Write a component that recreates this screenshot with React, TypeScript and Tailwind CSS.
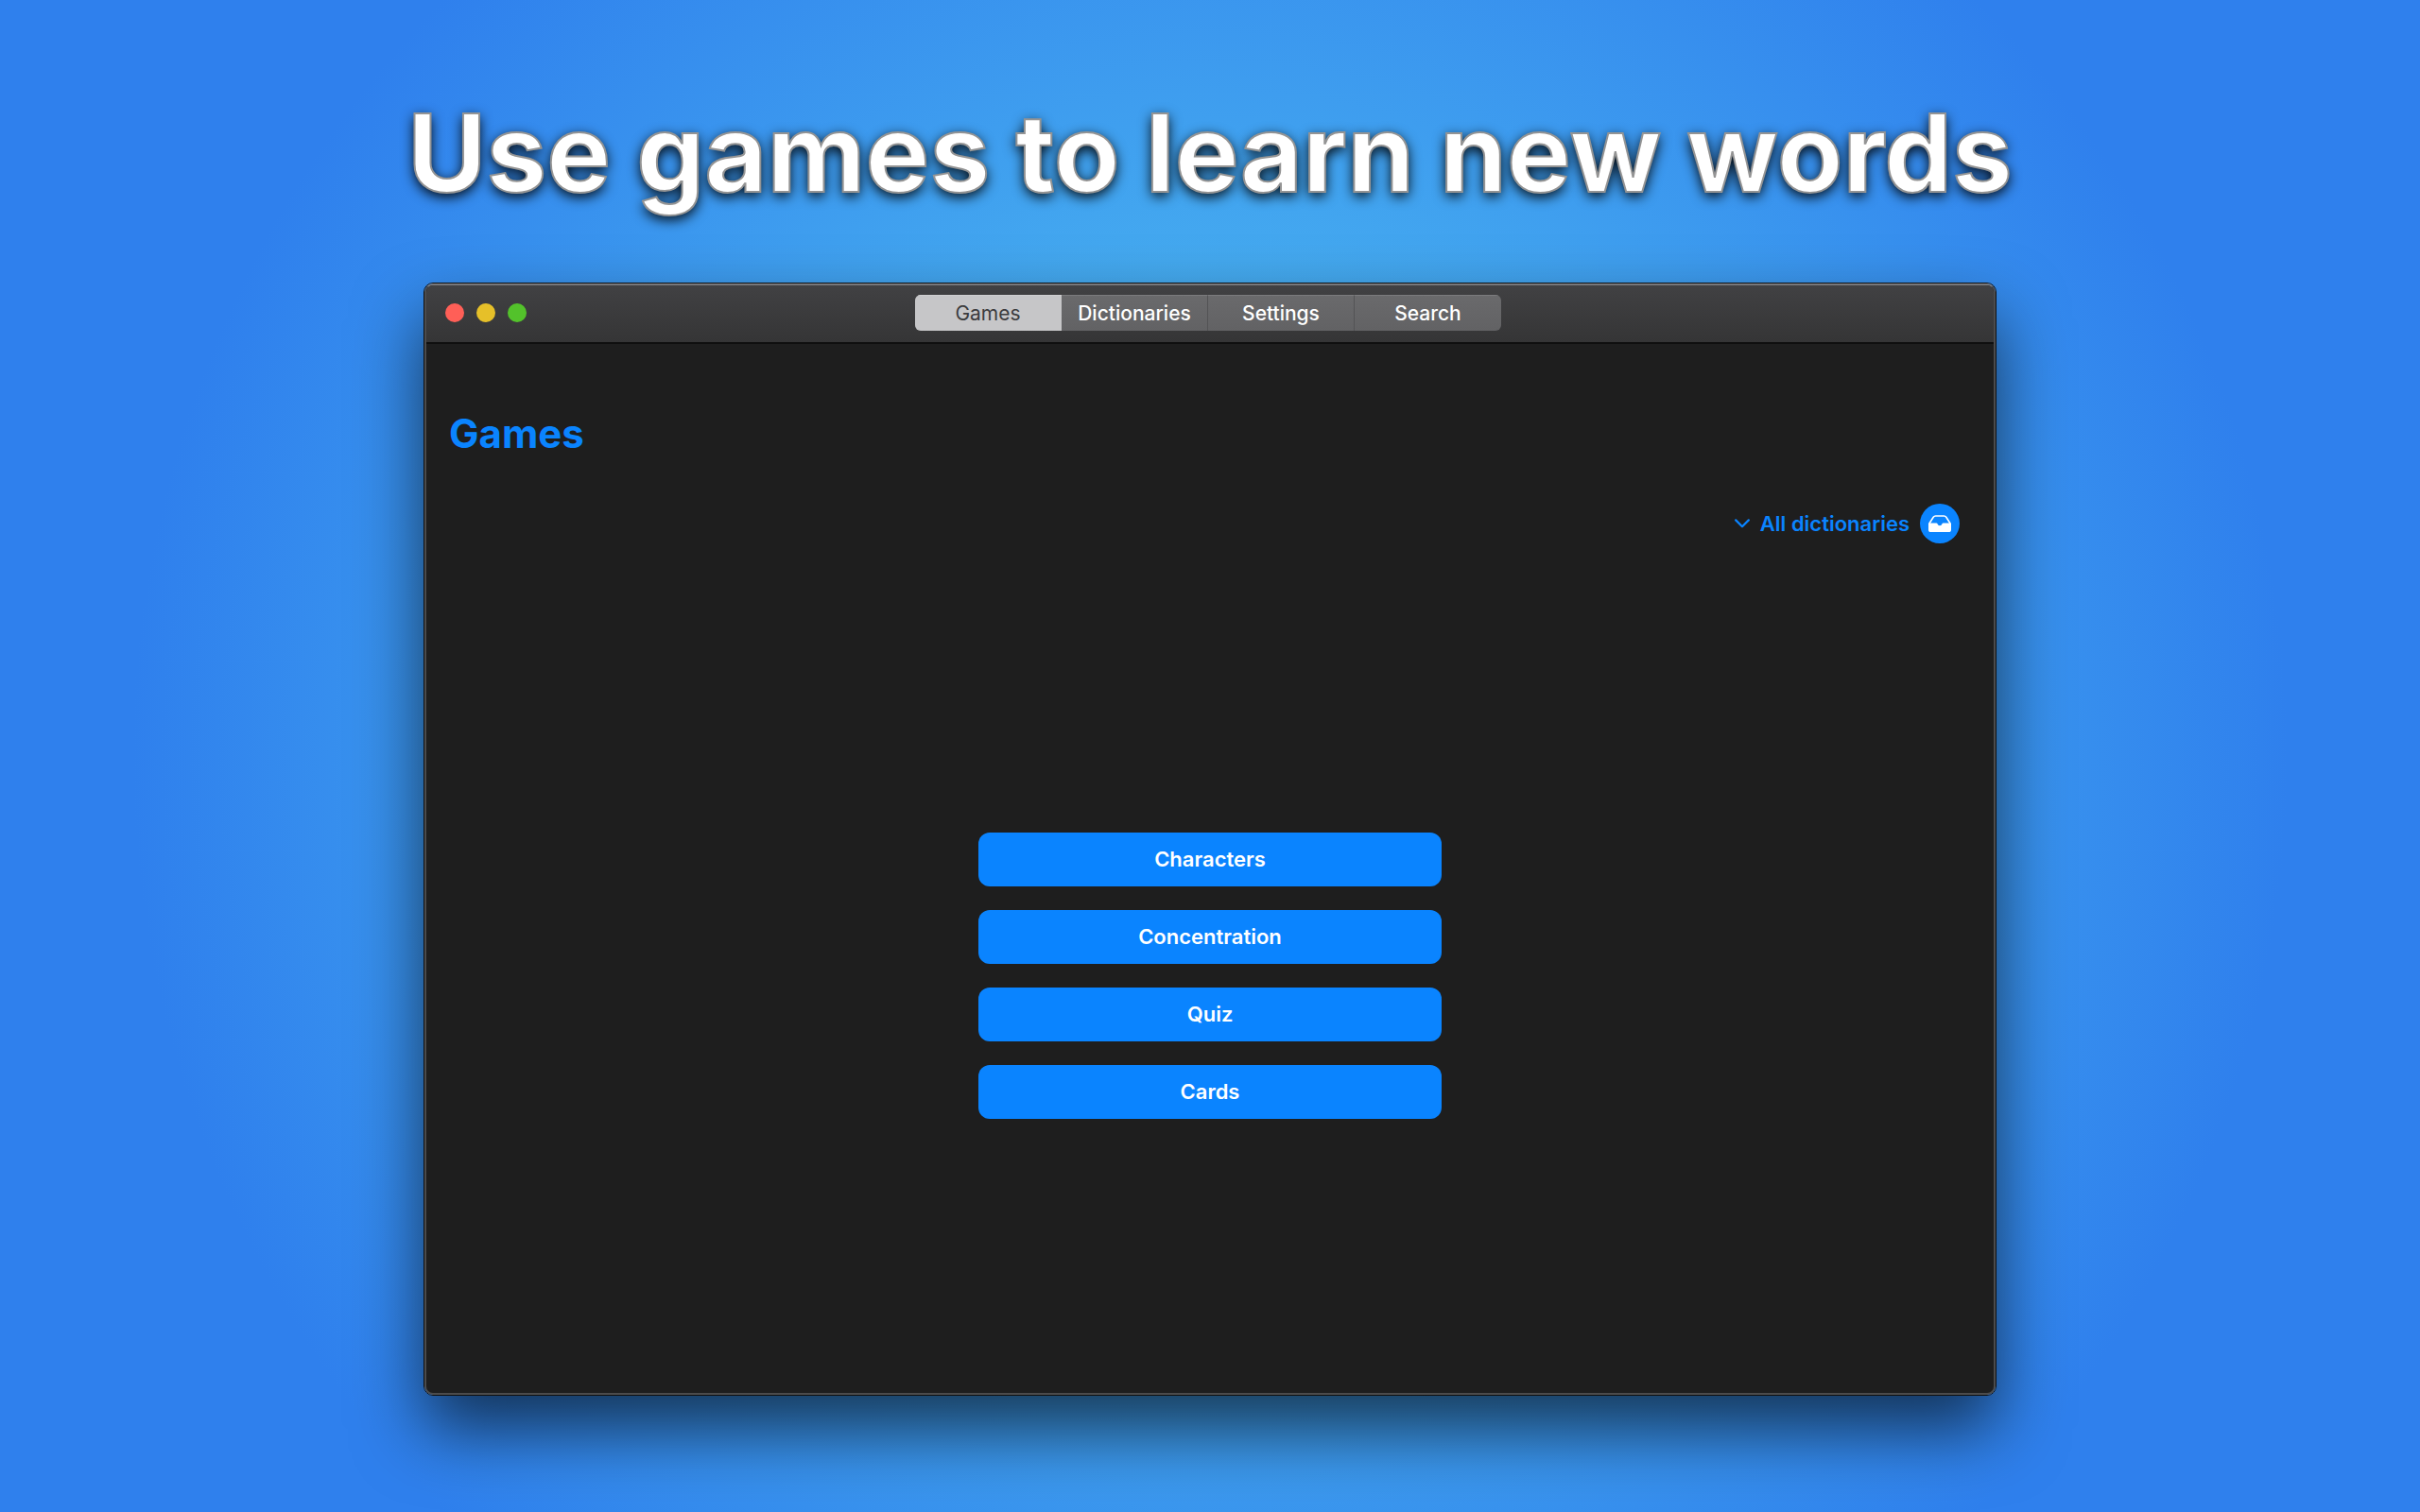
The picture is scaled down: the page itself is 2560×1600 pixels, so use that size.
import { useState } from 'react';
import { clsx } from 'clsx';

const TABS = ['Games', 'Dictionaries', 'Settings', 'Search'];
const GAMES = ['Characters', 'Concentration', 'Quiz', 'Cards'];

function ChevronIcon() {
  return (
    <svg viewBox="0 0 16 10" className="h-[10px] w-4" aria-hidden="true">
      <path
        d="M1.2 1.4 8 8.2l6.8-6.8"
        fill="none"
        stroke="currentColor"
        strokeWidth="2.2"
        strokeLinecap="round"
        strokeLinejoin="round"
      />
    </svg>
  );
}

function TrayIcon() {
  return (
    <svg viewBox="0 0 24 18" className="h-[18px] w-6" aria-hidden="true">
      <path
        d="M.9 9 5.2 2.2Q6 1 7.6 1h8.8q1.6 0 2.4 1.2L23.1 9"
        fill="none"
        stroke="currentColor"
        strokeWidth="1.6"
        strokeLinejoin="round"
      />
      <path
        d="M0 8.4h8.4q.9 0 1.1.9a2.6 2.6 0 0 0 5 0q.2-.9 1.1-.9H24v7q0 2.6-2.6 2.6H2.6Q0 18 0 15.4z"
        fill="currentColor"
      />
    </svg>
  );
}

function TitleBar({ tab, onSelect }: { tab: string; onSelect: (tab: string) => void }) {
  return (
    <header className="grid h-[62px] grid-cols-[1fr_620px_1fr] items-center border-b-2 border-[#0f0f0f] bg-linear-to-b from-[#414143] to-[#353536] pb-[2px] pl-5 pr-6">
      <div className="flex gap-[13px]">
        <button type="button" aria-label="Close" className="size-5 rounded-full bg-[#ff5f57]" />
        <button type="button" aria-label="Minimize" className="size-5 rounded-full bg-[#e6c029]" />
        <button type="button" aria-label="Zoom" className="size-5 rounded-full bg-[#53c22b]" />
      </div>
      <nav className="grid h-[38px] grid-cols-4 overflow-hidden rounded-md bg-linear-to-b from-[#6a6a6c] to-[#626264]">
        {TABS.map((name) => (
          <button
            key={name}
            type="button"
            aria-pressed={name === tab}
            onClick={() => onSelect(name)}
            className={clsx(
              'border-r border-t text-[21px] leading-none last:border-r-0',
              name === tab
                ? 'border-r-[#c6c6c8] border-t-[#cfcfd1] bg-[#c6c6c8] text-[#3c3c3e]'
                : 'border-r-[#535355] border-t-[#7b7b7d] font-medium text-white',
            )}
          >
            {name}
          </button>
        ))}
      </nav>
    </header>
  );
}

export default function App() {
  const [tab, setTab] = useState('Games');

  return (
    <div className="flex min-h-screen flex-col items-center bg-[radial-gradient(circle_1140px_at_50%_50%,#56ccf2,#2f80ed)] pb-[123px] pt-[82px] font-['Inter','Liberation_Sans',sans-serif]">
      <h1 className="whitespace-nowrap text-[114px] font-bold leading-[160px] text-white [-webkit-text-stroke:2px_#949494] [text-shadow:0_4px_14px_#000]">
        Use games to learn new words
      </h1>

      <div className="mt-[57px] flex w-[65%] flex-1 flex-col rounded-[10px] border border-[#111] shadow-[0_36px_72px_rgba(0,0,0,0.63)]">
        <div className="flex flex-1 flex-col overflow-hidden rounded-[9px] border-2 border-[#4b4b4c] border-t-[#77777a] bg-[#1e1e1e]">
          <TitleBar tab={tab} onSelect={setTab} />

          <main className="flex flex-1 flex-col">
            <h2 className="px-6 pt-[69px] text-[42px] font-bold leading-[52px] text-[#0a84ff]">Games</h2>

            <div className="flex items-center justify-end pr-9 pt-12 text-[#0a84ff]">
              <button type="button" className="flex items-center gap-[11px] text-[22px] font-semibold">
                <ChevronIcon />
                All dictionaries
                <span className="flex size-[42px] items-center justify-center rounded-full bg-[#0a84ff] text-white">
                  <TrayIcon />
                </span>
              </button>
            </div>

            <div className="flex flex-1 flex-col items-center justify-center gap-[25px] pt-4">
              {GAMES.map((game) => (
                <button
                  key={game}
                  type="button"
                  className="h-[57px] w-[490px] rounded-xl bg-[#0a84ff] text-[22px] font-semibold text-white"
                >
                  {game}
                </button>
              ))}
            </div>
          </main>
        </div>
      </div>
    </div>
  );
}
